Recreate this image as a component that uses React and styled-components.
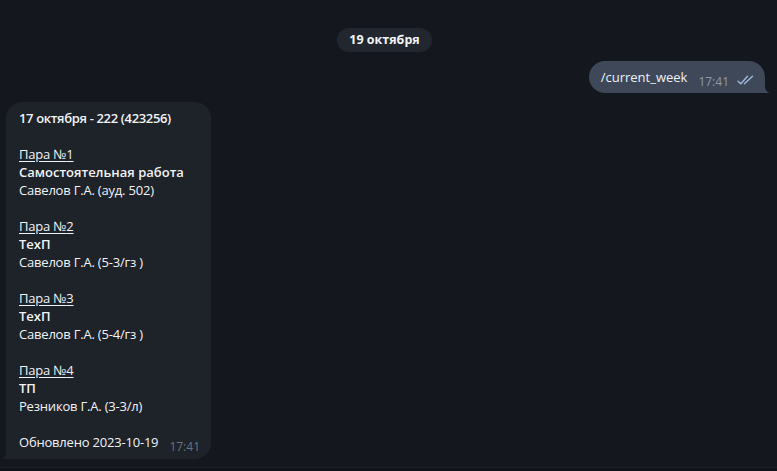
import React from 'react';
import styled, { createGlobalStyle } from 'styled-components';

const GlobalStyle = createGlobalStyle`
  html, body {
    margin: 0;
    padding: 0;
    background: #14171d;
  }
  body {
    font-family: "Open Sans", "Noto Sans", sans-serif;
    -webkit-font-smoothing: antialiased;
  }
`;

const Screen = styled.div`
  width: 777px;
  height: 471px;
  display: flex;
  flex-direction: column;
  background: #14171d;
  overflow: hidden;
`;

const Chat = styled.div`
  flex: 1;
  display: flex;
  flex-direction: column;
  padding: 28px 8px 0 0;
  min-height: 0;
`;

const DatePill = styled.div`
  align-self: center;
  height: 24px;
  padding: 0 12px;
  border-radius: 12px;
  background: #22262e;
  color: #f2f4f7;
  font-size: 12.5px;
  font-weight: 700;
  line-height: 24px;
`;

const Row = styled.div`
  display: flex;
  justify-content: ${p => (p.$out ? 'flex-end' : 'flex-start')};
  padding: ${p => (p.$out ? '9px 4px 0 0' : '9px 0 0 6px')};
`;

const Bubble = styled.div`
  position: relative;
  background: ${p => (p.$out ? '#3e4859' : '#1e2229')};
  color: #f1f3f6;
  font-size: 13px;
  line-height: 18px;
  border-radius: ${p => (p.$out ? '16px 16px 0 16px' : '16px 16px 16px 0')};
  padding: ${p => (p.$out ? '7px 10px 7px 12px' : '7px 11px 8px 13px')};
  width: ${p => p.$width || 'auto'};

  &::after {
    content: '';
    position: absolute;
    bottom: 0;
    width: 6px;
    height: 12px;
    background: inherit;
    ${p =>
      p.$out
        ? 'right: -5px; clip-path: path("M0 0 C0 7 2 11 6 12 L0 12 Z");'
        : 'left: -5px; clip-path: path("M6 0 C6 7 4 11 0 12 L6 12 Z");'}
  }
`;

const Line = styled.div`
  min-height: 18px;
  font-weight: ${p => (p.$bold ? 600 : 400)};
  letter-spacing: ${p => p.$spacing || '-0.2px'};
  white-space: nowrap;
`;

const Link = styled.span`
  text-decoration: underline;
  text-underline-offset: 2px;
`;

const Footer = styled.div`
  display: flex;
  align-items: flex-end;
  justify-content: space-between;
  gap: 10px;
  white-space: nowrap;
  letter-spacing: -0.2px;
`;

const Time = styled.span`
  font-size: 12px;
  line-height: 14px;
  letter-spacing: 0;
  color: ${p => (p.$out ? '#8d9aae' : '#6c7380')};
  transform: translateY(${p => (p.$out ? '2px' : '3px')});
`;

const OutLine = styled.div`
  display: flex;
  align-items: center;
  gap: 11px;
  color: #eef2f8;
  height: 18px;
`;

const Meta = styled.div`
  display: flex;
  align-items: center;
  gap: 8px;
  transform: translateY(3px);
`;

const InputEdge = styled.div`
  height: 3px;
  border-top: 1px solid #1c2027;
  background: #111318;
`;

const Checks = () => (
  <svg width="18" height="10" viewBox="0 0 18 10" fill="none">
    <path d="M1 6.2 L3.8 8.8 L10.5 1.2" stroke="#9fb8de" strokeWidth="1.4" strokeLinecap="round" strokeLinejoin="round" />
    <path d="M7.4 8.8 L15.5 1.2" stroke="#9fb8de" strokeWidth="1.4" strokeLinecap="round" />
  </svg>
);

const lessons = [
  { n: 1, title: 'Самостоятельная работа', who: 'Савелов Г.А. (ауд. 502)' },
  { n: 2, title: 'ТехП', who: 'Савелов Г.А. (5-3/гз )' },
  { n: 3, title: 'ТехП', who: 'Савелов Г.А. (5-4/гз )' },
  { n: 4, title: 'ТП', who: 'Резников Г.А. (3-3/л)' },
];

export default function App() {
  return (
    <Screen>
      <GlobalStyle />
      <Chat>
        <DatePill>19 октября</DatePill>

        <Row $out>
          <Bubble $out>
            <OutLine>
              <span>/current_week</span>
              <Meta>
                <Time $out>17:41</Time>
                <Checks />
              </Meta>
            </OutLine>
          </Bubble>
        </Row>

        <Row>
          <Bubble $width="181px">
            <Line $bold $spacing="-0.35px">17 октября - 222 (423256)</Line>
            <Line />
            {lessons.map(l => (
              <React.Fragment key={l.n}>
                <Line><Link>Пара №{l.n}</Link></Line>
                <Line $bold $spacing="0">{l.title}</Line>
                <Line>{l.who}</Line>
                <Line />
              </React.Fragment>
            ))}
            <Footer>
              <span>Обновлено 2023-10-19</span>
              <Time>17:41</Time>
            </Footer>
          </Bubble>
        </Row>
      </Chat>
      <InputEdge />
    </Screen>
  );
}
